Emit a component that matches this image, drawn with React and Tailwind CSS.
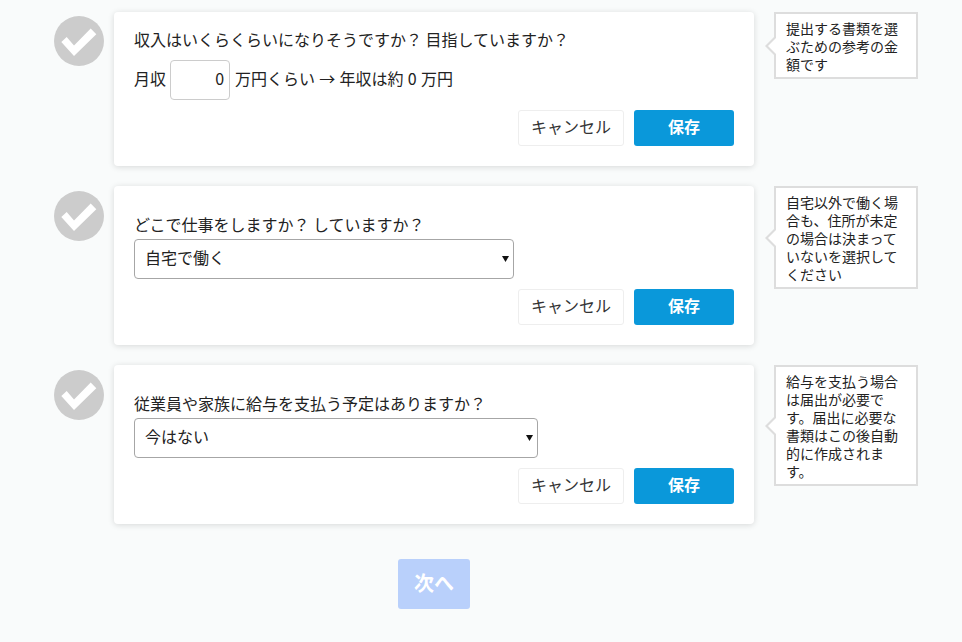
const font = "font-['Noto_Sans_CJK_JP','Liberation_Sans',sans-serif]"

function CheckCircle({ className }) {
  return (
    <div className={`mr-[10px] h-[50px] w-[50px] shrink-0 rounded-full bg-[#cccccc] ${className}`}>
      <svg width="50" height="50" viewBox="0 0 50 50">
        <path d="M7.3 26 L12.7 21 L20 29.5 L36.7 12.5 L42.3 18.3 L20 40 Z" fill="#ffffff" />
      </svg>
    </div>
  )
}

function Buttons() {
  return (
    <div className="flex justify-end gap-[10px]">
      <button className="h-9 w-[106px] rounded-[3px] border border-[#eeeeee] bg-white pb-[4px] text-base text-[#333333]">
        キャンセル
      </button>
      <button className="h-9 w-[100px] rounded-[3px] bg-[#0a98da] pb-[4px] text-base font-bold text-white">保存</button>
    </div>
  )
}

function Tip({ children }) {
  return (
    <div className="relative ml-5 w-[144px] shrink-0 border-2 border-[#dddddd] bg-white px-[10px] pb-[4px] pt-[5px] text-sm leading-[18px] text-[#222222]">
      {children}
      <div className="absolute left-[-11px] top-1/2 h-0 w-0 -translate-y-1/2 border-y-[10px] border-r-[10px] border-y-transparent border-r-[#dddddd]" />
      <div className="absolute left-[-8px] top-1/2 h-0 w-0 -translate-y-1/2 border-y-[8px] border-r-[8px] border-y-transparent border-r-white" />
    </div>
  )
}

function Select({ value, width }) {
  return (
    <div className={`relative h-10 ${width}`}>
      <select
        defaultValue={value}
        className="h-10 w-full appearance-none rounded-[4px] border border-[#a6a6a6] bg-white pb-[5px] pl-[10px] text-base text-[#222222]"
      >
        <option>{value}</option>
      </select>
      <svg className="absolute right-[5px] top-[17px]" width="7" height="6" viewBox="0 0 7 6">
        <path d="M0 0 H7 L3.5 6 Z" fill="#111111" />
      </svg>
    </div>
  )
}

function Row({ tip, className, iconClass, children }) {
  return (
    <div className={`flex items-start ${className}`}>
      <CheckCircle className={iconClass} />
      <div className="w-[640px] shrink-0 rounded-[4px] bg-white px-5 shadow-[0_1px_6px_rgba(0,0,0,0.14)]">
        {children}
      </div>
      <Tip>{tip}</Tip>
    </div>
  )
}

export default function App() {
  return (
    <div className={`h-[642px] overflow-hidden bg-[#f9fbfb] pl-[54px] pt-3 text-[#222222] ${font}`}>
      <Row tip="提出する書類を選ぶための参考の金額です" className="mb-5" iconClass="mt-1">
        <div className="h-[154px] pt-[15px]">
          <p className="text-base leading-6">収入はいくらくらいになりそうですか？ 目指していますか？</p>
          <div className="mt-[9px] flex items-center text-base">
            <span className="pb-[5px]">月収</span>
            <div className="ml-[4px] mr-[5px] flex h-10 w-[60px] items-center justify-end rounded-[4px] border border-[#cccccc] pb-[5px] pr-[5px]">
              0
            </div>
            <span className="pb-[5px] [word-spacing:0.7px]">万円くらい → 年収は約 0 万円</span>
          </div>
          <div className="mt-[10px]">
            <Buttons />
          </div>
        </div>
      </Row>

      <Row
        tip="自宅以外で働く場合も、住所が未定の場合は決まっていないを選択してください"
        className="mb-5"
        iconClass="mt-[5px]"
      >
        <div className="h-[159px] pt-[26px]">
          <p className="text-base leading-6">どこで仕事をしますか？ していますか？</p>
          <div className="mt-[3px]">
            <Select value="自宅で働く" width="w-[380px]" />
          </div>
          <div className="mt-[10px]">
            <Buttons />
          </div>
        </div>
      </Row>

      <Row tip="給与を支払う場合は届出が必要です。届出に必要な書類はこの後自動的に作成されます。" iconClass="mt-[5px]">
        <div className="h-[159px] pt-[26px]">
          <p className="text-base leading-6">従業員や家族に給与を支払う予定はありますか？</p>
          <div className="mt-[3px]">
            <Select value="今はない" width="w-[404px]" />
          </div>
          <div className="mt-[10px]">
            <Buttons />
          </div>
        </div>
      </Row>

      <div className="ml-[344px] mt-[35px]">
        <button className="h-[50px] w-[72px] rounded-[3px] bg-[#b9d0fb] pb-[2px] text-xl font-bold text-white">次へ</button>
      </div>
    </div>
  )
}
